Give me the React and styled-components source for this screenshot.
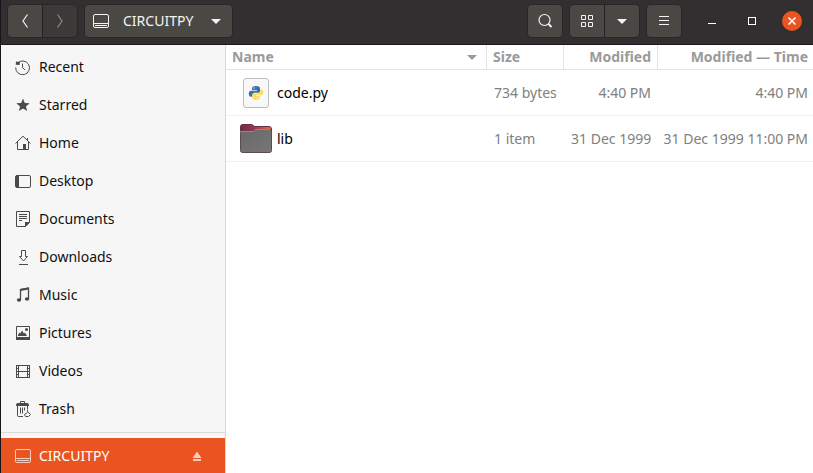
import React from "react";
import styled, { createGlobalStyle, css } from "styled-components";

const GlobalStyle = createGlobalStyle`
  *, *::before, *::after { box-sizing: border-box; }
  body { margin: 0; font-family: "Noto Sans", sans-serif; font-size: 14px; line-height: 20px; }
  button { font: inherit; color: inherit; border: 0; padding: 0; margin: 0; background: none; }
  a { color: inherit; text-decoration: none; }
`;

const Window = styled.div`
  display: flex;
  flex-direction: column;
  height: 100vh;
  overflow: hidden;
  border-left: 1px solid #17151a;
  background: #fff;
`;

const HeaderBar = styled.header`
  display: flex;
  flex: none;
  gap: 6px;
  padding: 4px 1px 6px 6px;
  background: #322f30;
  border-bottom: 1px solid #1c1a1b;
  color: #fff;
`;

const ButtonGroup = styled.div`
  display: flex;
  gap: 1px;
  height: 34px;
  border: 1px solid #292627;
  border-radius: 5px;
  background: #242122;
  overflow: hidden;
`;

const ToolButton = styled.button`
  display: flex;
  align-items: center;
  justify-content: center;
  min-width: 34px;
  background: ${(p) => (p.disabled ? "#3b3a39" : "#4a4845")};
  color: ${(p) => (p.disabled ? "#908e8c" : "#f5f4f2")};
`;

const PathButton = styled(ToolButton)`
  gap: 14px;
  padding: 0 8px;
`;

const PathLabel = styled.span`
  min-width: 71px;
  text-align: left;
`;

const Spacer = styled.div`
  flex: 1;
`;

const WindowControls = styled.div`
  display: flex;
  margin-left: 4px;
`;

const ControlButton = styled.button`
  display: flex;
  align-items: center;
  justify-content: center;
  width: 40px;
`;

const CloseDisc = styled.span`
  display: flex;
  width: 20px;
  height: 20px;
  border-radius: 50%;
  background: #e95420;
`;

const Body = styled.div`
  display: flex;
  flex: 1;
  min-height: 0;
`;

const Sidebar = styled.nav`
  flex: none;
  width: 225px;
  padding-top: 3px;
  background: #f6f6f6;
  border-right: 1px solid #d9d9d9;
  overflow: hidden;
`;

const PlaceList = styled.ul`
  list-style: none;
  margin: 0;
  padding: 0;
`;

const PlaceRow = styled.li`
  display: flex;
  align-items: center;
  height: 38px;
  padding: 0 20px 0 14px;
  ${(p) =>
    p.$selected &&
    css`
      height: 36px;
      background: #e95420;
      color: #fff;
    `}
`;

const PlaceLink = styled.a`
  display: flex;
  flex: 1;
  align-items: center;
  gap: 8px;
  color: ${(p) => (p.$selected ? "#fff" : "#101010")};
  svg { color: ${(p) => (p.$selected ? "#f9cdbd" : "#4a4a4a")}; }
`;

const EjectButton = styled.button`
  display: flex;
  color: #f9cdbd;
`;

const Divider = styled.hr`
  height: 1px;
  margin: 4px 0 5px;
  border: 0;
  background: #d9d9d9;
`;

const FilePane = styled.main`
  flex: 1;
  min-width: 0;
`;

const FileTable = styled.table`
  width: 100%;
  table-layout: fixed;
  border-collapse: separate;
  border-spacing: 0;
`;

const HeadCell = styled.th`
  height: 25px;
  width: ${(p) => p.$width || "auto"};
  padding: 0;
  border-bottom: 1px solid #e4e4e4;
  border-right: ${(p) => (p.$last ? "0" : "1px solid #e4e4e4")};
`;

const SortButton = styled.button`
  display: flex;
  align-items: center;
  justify-content: ${(p) => p.$justify || "flex-start"};
  width: 100%;
  height: 24px;
  padding: 0 ${(p) => (p.$last ? "5px" : "6px")};
  color: #9a9a9a;
  font-weight: 700;
  white-space: nowrap;
`;

const Cell = styled.td`
  height: 46px;
  padding: 0 7px;
  border-bottom: 1px solid #f1f1f1;
  color: #808080;
  text-align: ${(p) => (p.$end ? "right" : "left")};
  white-space: nowrap;
  ${(p) => p.$last && "padding: 0 5px 0 0;"}
`;

const FileName = styled.div`
  display: flex;
  align-items: center;
  gap: 5px;
  padding-left: 7px;
  color: #000;
`;

const Svg = styled.svg.attrs({ "aria-hidden": true })`
  display: block;
  flex: none;
  fill: none;
  stroke: currentColor;
`;

function Icon({ size = 16, children }) {
  return (
    <Svg width={size} height={size} viewBox={`0 0 ${size} ${size}`}>
      {children}
    </Svg>
  );
}

const solid = { fill: "currentColor", stroke: "none" };

const DriveIcon = () => (
  <Icon>
    <rect x="0.5" y="1.5" width="15" height="13" rx="1.5" />
    <path d="M1 10.5h14M2 12.5h12" />
  </Icon>
);
const BackIcon = () => <Icon><path d="M10.5 1.5 6 8l4.500 6.500" strokeWidth="1.200" /></Icon>;
const ForwardIcon = () => <Icon><path d="M5.500 1.500 10 8l-4.500 6.500" strokeWidth="1.200" /></Icon>;
const DownArrow = () => <Icon><path {...solid} d="M3 6h10L8 11z" /></Icon>;
const SearchIcon = () => (
  <Icon>
    <circle cx="7.500" cy="7" r="5.500" strokeWidth="1.200" />
    <path d="m11.500 11 3 3" strokeWidth="1.800" />
  </Icon>
);
const GridIcon = () => (
  <Icon><path d="M2.500 2.500h4v4h-4zM9.500 2.500h4v4h-4zM2.500 9.500h4v4h-4zM9.500 9.500h4v4h-4z" /></Icon>
);
const MenuIcon = () => <Icon><path d="M3 3.500h10M3 7.500h10M3 11.500h10" /></Icon>;
const MinimizeIcon = () => <Icon><path d="M4 10.500h8" /></Icon>;
const MaximizeIcon = () => <Icon><rect x="4.500" y="4.500" width="7" height="7" /></Icon>;
const CloseIcon = () => <Icon size={20}><path d="m6.500 6.500 7 7m0-7-7 7" strokeWidth="1.600" /></Icon>;

const RecentIcon = () => (
  <Icon>
    <path d="M2.300 4.400A6.900 6.900 0 1 1 .7 8.500" />
    <path {...solid} d="M1 2.500 5 3l-.5 3-3.800-.2z" />
    <path d="M7.500 4.500v4l2.500 2.500" />
  </Icon>
);
const StarIcon = () => (
  <Icon><path {...solid} d="m8 1.500 1.800 4.600 4.900.2-3.800 3.100 1.300 4.700L8 11.500l-4.200 2.600 1.300-4.700L1.300 6.300l4.900-.2z" /></Icon>
);
const HomeIcon = () => (
  <Icon>
    <path d="M.5 8.500 8 1.200l7.500 7.300M2.500 7v7.500h11V7M12.500 5V3" />
    <path {...solid} d="M8 9h3v5H8z" />
  </Icon>
);
const DesktopIcon = () => (
  <Icon>
    <rect x="0.500" y="2.500" width="15" height="12" rx="1.500" />
    <path {...solid} d="M1 2.500h3v12H1z" />
  </Icon>
);
const DocumentIcon = () => (
  <Icon>
    <path d="M1.500.5h13v11l-4 4h-9zM4 3.500h8M4 5.500h8M4 7.500h8M4 9.500h3" />
    <path {...solid} d="M10 11h5l-5 5z" />
  </Icon>
);
const DownloadIcon = () => (
  <Icon><path d="M6.500 1.500h4v6h2l-4 4.500-4-4.500h2zM4 15.500h9" /></Icon>
);
const MusicIcon = () => (
  <Icon>
    <path d="M5.500 13V2.500L13.500 1v11" strokeWidth="1.300" />
    <path d="M5.500 3 13.500 1.500" strokeWidth="2" />
    <ellipse {...solid} cx="4" cy="13" rx="2.200" ry="1.800" />
    <ellipse {...solid} cx="12" cy="12" rx="2.200" ry="1.800" />
  </Icon>
);
const PictureIcon = () => (
  <Icon>
    <path d="M1.500 1.500h13v13h-13z" />
    <path {...solid} d="M1 12h14v3H1zM3 10l1.500-2.500 1 .8L7 5.500l2 3 1-1 2 3.500H3z" />
    <circle {...solid} cx="11.500" cy="4.500" r="1.500" />
  </Icon>
);
const VideoIcon = () => (
  <Icon>
    <path d="M3.500 2.500h9v12h-9zM4 8.500h8M1.500 2v13M14.500 2v13" />
    <path d="M1 2.500h3M1 5.500h3M1 8.500h3M1 11.500h3M1 14.500h3M12 2.500h3M12 5.500h3M12 8.500h3M12 11.500h3M12 14.500h3" />
  </Icon>
);
const TrashIcon = () => (
  <Icon>
    <path d="M5.500 2V.5h4V2M2.500 5v9.500q0 1 1 1H8M12.500 5v3" />
    <path {...solid} d="M1 4q0-2 2-2h9q2 0 2 2v1H1z" />
    <path d="M5.500 6.500v6M7.500 6.500v6M9.500 6.500v3" />
    <path d="M12.500 8.500v2l3 3-2 2h-3l-1-2 3-2" />
  </Icon>
);
const EjectIcon = () => <Icon><path {...solid} d="M8 3.500 12.500 10h-9zM4 11h8v2H4z" /></Icon>;

function PythonFileIcon() {
  return (
    <Icon size={32}>
      <rect x="3.500" y="1.500" width="25" height="29" rx="2.500" fill="#f8f8f8" stroke="#bdbdbd" />
      <g stroke="none">
        <path fill="#3673a5" d="M16 9c-2.500 0-4 .8-4 2.200V13h5v.8h-6c-1.400 0-2.200 1.300-2.200 3s.8 3 2.200 3h1.300v-1.600c0-1.500 1-2.400 2.400-2.400h3.500c1.200 0 1.800-.8 1.800-1.800v-2.800C20 9.800 18.500 9 16 9z" />
        <path fill="#ffdb62" d="M16 23c2.500 0 4-.8 4-2.200V19h-4v-.8h5c1.400 0 2.200-1.300 2.200-2.900s-.8-3-2.200-3h-.8V14c0 1.500-1 2.400-2.400 2.400h-3.500c-1.200 0-1.900.8-1.900 1.800v2.600c0 1.400 1.300 2.200 3.800 2.200z" />
        <circle cx="14" cy="11" r=".7" fill="#fff" />
        <circle cx="18" cy="21" r=".7" fill="#fff" />
      </g>
    </Icon>
  );
}

function FolderIcon() {
  return (
    <Icon size={32}>
      <defs>
        <linearGradient id="folderBack" x1="0" x2="1" y1="0" y2="0">
          <stop offset="0" stopColor="#7d2450" />
          <stop offset=".45" stopColor="#a3344b" />
          <stop offset="1" stopColor="#ee6b37" />
        </linearGradient>
        <linearGradient id="folderFront" x1="0" x2="1" y1="0" y2="1">
          <stop offset="0" stopColor="#686868" />
          <stop offset="1" stopColor="#777" />
        </linearGradient>
      </defs>
      <path fill="url(#folderBack)" stroke="#633343" d="M.5 8V3.500q0-2 2-2h9q1 0 1.700.8l1.300 1.200h14.500q2.500 0 2.500 2.500v3z" />
      <path fill="url(#folderFront)" stroke="#5b4d4d" d="M.5 9.500q0-1.500 1.500-1.500h11.500l2-1.500H30q1.500 0 1.500 1.500v19.500q0 2-2 2h-27q-2 0-2-2z" />
      <path stroke="#918989" d="M1.500 8.500h12l2-2H30" />
    </Icon>
  );
}

const places = [
  ["Recent", RecentIcon],
  ["Starred", StarIcon],
  ["Home", HomeIcon],
  ["Desktop", DesktopIcon],
  ["Documents", DocumentIcon],
  ["Downloads", DownloadIcon],
  ["Music", MusicIcon],
  ["Pictures", PictureIcon],
  ["Videos", VideoIcon],
  ["Trash", TrashIcon],
];

const files = [
  { name: "code.py", Glyph: PythonFileIcon, size: "734 bytes", date: "4:40 PM", time: "4:40 PM" },
  { name: "lib", Glyph: FolderIcon, size: "1 item", date: "31 Dec 1999", time: "31 Dec 1999 11:00 PM" },
];

export default function App() {
  return (
    <Window>
      <GlobalStyle />
      <HeaderBar>
        <ButtonGroup>
          <ToolButton aria-label="Back"><BackIcon /></ToolButton>
          <ToolButton aria-label="Forward" disabled><ForwardIcon /></ToolButton>
        </ButtonGroup>
        <ButtonGroup>
          <PathButton>
            <DriveIcon />
            <PathLabel>CIRCUITPY</PathLabel>
            <DownArrow />
          </PathButton>
        </ButtonGroup>
        <Spacer />
        <ButtonGroup>
          <ToolButton aria-label="Search"><SearchIcon /></ToolButton>
        </ButtonGroup>
        <ButtonGroup>
          <ToolButton aria-label="Icon view"><GridIcon /></ToolButton>
          <ToolButton aria-label="View options"><DownArrow /></ToolButton>
        </ButtonGroup>
        <ButtonGroup>
          <ToolButton aria-label="Menu"><MenuIcon /></ToolButton>
        </ButtonGroup>
        <WindowControls>
          <ControlButton aria-label="Minimize"><MinimizeIcon /></ControlButton>
          <ControlButton aria-label="Maximize"><MaximizeIcon /></ControlButton>
          <ControlButton aria-label="Close"><CloseDisc><CloseIcon /></CloseDisc></ControlButton>
        </WindowControls>
      </HeaderBar>
      <Body>
        <Sidebar aria-label="Places">
          <PlaceList>
            {places.map(([label, Glyph]) => (
              <PlaceRow key={label}>
                <PlaceLink href={`#${label.toLowerCase()}`}><Glyph />{label}</PlaceLink>
              </PlaceRow>
            ))}
          </PlaceList>
          <Divider />
          <PlaceList>
            <PlaceRow $selected>
              <PlaceLink href="#circuitpy" $selected aria-current="page"><DriveIcon />CIRCUITPY</PlaceLink>
              <EjectButton aria-label="Eject CIRCUITPY"><EjectIcon /></EjectButton>
            </PlaceRow>
          </PlaceList>
        </Sidebar>
        <FilePane>
          <FileTable>
            <thead>
              <tr>
                <HeadCell scope="col" aria-sort="ascending">
                  <SortButton $justify="space-between">Name<DownArrow /></SortButton>
                </HeadCell>
                <HeadCell scope="col" $width="77px"><SortButton>Size</SortButton></HeadCell>
                <HeadCell scope="col" $width="94px"><SortButton $justify="flex-end">Modified</SortButton></HeadCell>
                <HeadCell scope="col" $width="155px" $last>
                  <SortButton $justify="flex-end" $last>Modified — Time</SortButton>
                </HeadCell>
              </tr>
            </thead>
            <tbody>
              {files.map(({ name, Glyph, size, date, time }) => (
                <tr key={name}>
                  <Cell><FileName><Glyph />{name}</FileName></Cell>
                  <Cell>{size}</Cell>
                  <Cell $end>{date}</Cell>
                  <Cell $end $last>{time}</Cell>
                </tr>
              ))}
            </tbody>
          </FileTable>
        </FilePane>
      </Body>
    </Window>
  );
}
